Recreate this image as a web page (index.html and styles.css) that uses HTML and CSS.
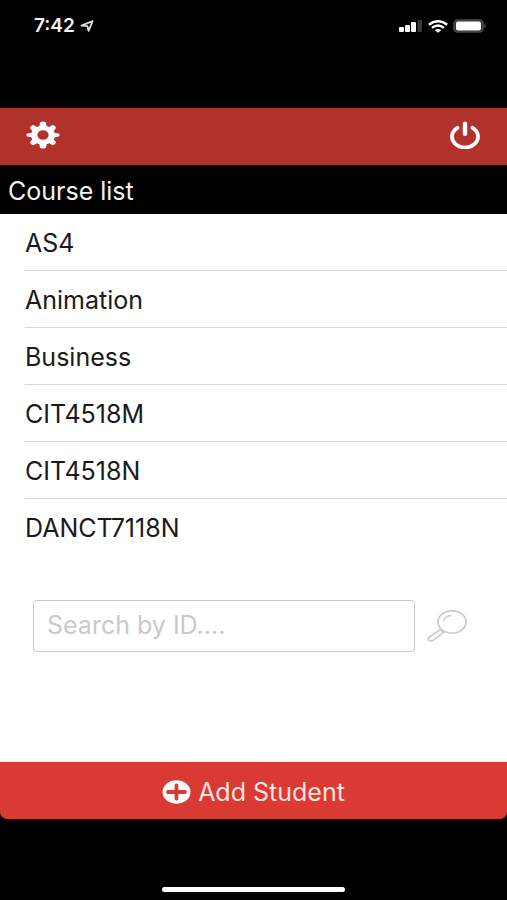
FILE: index.html
```html
<!DOCTYPE html>
<html lang="en">
<head>
<meta charset="utf-8">
<meta name="viewport" content="width=device-width, initial-scale=1">
<title>Course list</title>
<link rel="stylesheet" href="styles.css">
</head>
<body>
<div class="app">
  <header class="status">
    <div class="clock">
      <span>7:42</span>
      <svg width="14" height="12" viewBox="0 0 14 12" aria-hidden="true"><path d="M1.500 5.600 12.600 1.200 8.600 10.800 7.400 6.200Z" fill="none" stroke="#ddd" stroke-width="1.800" stroke-linejoin="round"/></svg>
    </div>
    <div class="indicators">
      <svg width="24" height="12" viewBox="0 0 24 12" aria-hidden="true"><g fill="#fff"><rect x="0" y="7" width="5" height="5" rx="1"/><rect x="6" y="5" width="5" height="7" rx="1"/><rect x="12" y="2" width="5" height="10" rx="1"/></g><rect x="18.500" y="0" width="4.500" height="12" rx="1" fill="#383838"/></svg>
      <svg width="20" height="13" viewBox="0 0 20 13" aria-hidden="true"><g fill="none" stroke="#fff" stroke-width="2.400"><path d="M.8 4.700Q10-2.300 19.200 4.700"/><path d="M4 7.900Q10 3.100 16 7.900"/></g><path d="M6.700 10.200Q10 7.700 13.300 10.200L10 12.800Z" fill="#fff"/></svg>
      <svg width="34" height="14" viewBox="0 0 34 14" aria-hidden="true"><rect x="1" y="1" width="29" height="12" rx="3.500" fill="#333" stroke="#4a4a4a" stroke-width="1.600"/><rect x="3" y="2.500" width="25" height="9" rx="2" fill="#fff"/><path d="M31.500 4.500Q34 7 31.500 9.500Z" fill="#666"/></svg>
    </div>
  </header>

  <nav class="toolbar">
    <button class="icon-button" type="button" aria-label="Settings">
      <svg width="34" height="28" viewBox="0 0 34 28" aria-hidden="true"><path fill="#fff" fill-rule="evenodd" d="M14 1.500Q17-.5 20 1.500L20.600 5 23 5.900 26.700 3.900Q29.700 4.500 30 7L27.700 10 28.700 12 32.800 12.600Q34.500 14 32.800 15.600L28.700 16.200 27.700 18.200 30 21.200Q29.700 23.700 26.700 24.300L23 22.200 20.600 23.200 20 26.700Q17 28.500 14 26.700L13.400 23.200 11 22.200 7.300 24.300Q4.300 23.700 4 21.200L6.300 18.200 5.300 16.200 1.200 15.600Q-.5 14 1.200 12.600L5.300 12 6.300 10 4 7Q4.300 4.500 7.300 3.900L11 5.900 13.400 5ZM17 9.200A5.600 4.800 0 1 0 17 18.800A5.600 4.800 0 1 0 17 9.200Z"/></svg>
    </button>
    <button class="icon-button" type="button" aria-label="Log out">
      <svg width="32" height="28" viewBox="0 0 32 28" aria-hidden="true"><g fill="none" stroke="#fff" stroke-linecap="round"><path d="M8.500 6.800A13 10.800 0 1 0 23.500 6.800" stroke-width="3.800"/><path d="M16 2.700V12.800" stroke-width="4.400"/></g></svg>
    </button>
  </nav>

  <main class="content">
    <h1 class="title">Course list</h1>
    <ul class="courses">
      <li>AS4</li>
      <li>Animation</li>
      <li>Business</li>
      <li>CIT4518M</li>
      <li>CIT4518N</li>
      <li>DANCT7118N</li>
    </ul>
    <form class="search">
      <input type="text" placeholder="Search by ID...." aria-label="Search by ID">
      <button class="icon-button" type="button" aria-label="Search">
        <svg width="40" height="34" viewBox="0 0 40 34" aria-hidden="true"><g fill="none" stroke="#ccc" stroke-width="1.800" stroke-linecap="round" stroke-linejoin="round"><ellipse cx="25" cy="13" rx="14" ry="11.200"/><path d="M16.500 12Q18 7 24 6.500" stroke-width="1.400"/><path d="M14 20 1.500 28.800Q.6 30.500 2.500 31.500 4.500 32.600 6 31.400L17.500 22.800M13 20.800 16.600 23.200"/></g></svg>
      </button>
    </form>
  </main>

  <button class="add" type="button">
    <svg width="29" height="24" viewBox="0 0 29 24" aria-hidden="true"><ellipse cx="14.500" cy="12" rx="14" ry="11.800" fill="#fff"/><path d="M14.500 5.500V18.500M6 12H23" stroke="#d93a34" stroke-width="3.800" stroke-linecap="round"/></svg>
    <span>Add Student</span>
  </button>
  <footer class="home"><div class="home-bar"></div></footer>
</div>
</body>
</html>
```
FILE: styles.css
```css
* {
  box-sizing: border-box;
}

body {
  margin: 0;
  background: #000;
  color: #1a1a1a;
  font-family: Inter, "Liberation Sans", sans-serif;
  font-size: 25px;
  line-height: 28px;
}

svg {
  display: block;
  flex: none;
}

button {
  border: 0;
  padding: 0;
  background: none;
  font: inherit;
}

.app {
  display: flex;
  flex-direction: column;
  min-height: 100vh;
}

.status {
  display: flex;
  justify-content: space-between;
  align-items: flex-start;
  padding: 12px 20px 68px 34px;
}

.clock,
.indicators {
  display: flex;
  align-items: center;
  height: 28px;
}

.clock {
  gap: 5px;
  color: #f2f2f2;
  font-size: 19px;
  font-weight: 600;
}

.indicators {
  gap: 5px;
}

.toolbar {
  display: flex;
  justify-content: space-between;
  align-items: center;
  padding: 13px 26px 16px;
  background: #b1322d;
}

.content {
  flex: 1;
  background: #fff;
}

.title {
  margin: 0;
  padding: 12px 8px 9px;
  background: #000;
  color: #f2f2f2;
  font-size: 25px;
  font-weight: 400;
}

.courses {
  margin: 0;
  padding: 0 0 0 25px;
  list-style: none;
}

.courses li {
  padding: 15px 0 13px;
  border-bottom: 1px solid #d9d9d9;
}

.courses li:last-child {
  border-bottom-color: transparent;
}

.search {
  display: flex;
  align-items: center;
  gap: 12px;
  padding: 44px 40px 40px 33px;
}

.search input {
  flex: 1;
  min-width: 0;
  height: 52px;
  padding: 0 13px 2px;
  border: 1px solid #ccc;
  border-radius: 3px;
  background: #fff;
  color: #1a1a1a;
  font: inherit;
}

.search input::placeholder {
  color: #c9c9cc;
  opacity: 1;
}

.add {
  display: flex;
  justify-content: center;
  align-items: center;
  gap: 7px;
  padding: 16px 0 13px;
  border-radius: 0 0 7px 7px;
  background: #d93a34;
  color: #ffe4df;
}

.home {
  display: flex;
  justify-content: center;
  padding: 68px 0 8px;
}

.home-bar {
  width: 36%;
  height: 5px;
  border-radius: 3px;
  background: #fff;
}
```
